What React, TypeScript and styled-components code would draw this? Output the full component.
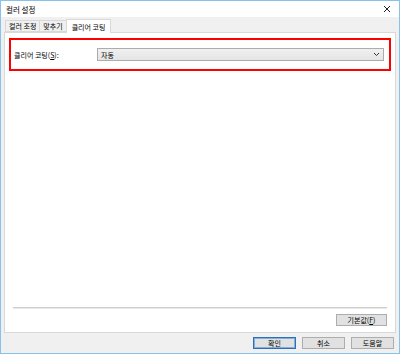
import React from 'react';
import styled, { createGlobalStyle } from 'styled-components';

const Global = createGlobalStyle`
  html, body { margin: 0; padding: 0; background: #fff; }
  body { font-family: 'Noto Sans CJK KR', 'Liberation Sans', sans-serif; }
`;

const Window = styled.div`
  width: 400px;
  height: 354px;
  box-sizing: border-box;
  border: 1px solid #86c3ec;
  display: flex;
  flex-direction: column;
  background: #f0f0f0;
  color: #000;
  font-size: 7px;
`;

const TitleBar = styled.div`
  height: 16px;
  flex: none;
  background: #fff;
  display: flex;
  align-items: center;
  justify-content: space-between;
  padding: 0 8px 0 5px;
  font-size: 7.5px;
`;

const Body = styled.div`
  flex: 1;
  display: flex;
  flex-direction: column;
  padding: 2px 3px 4px 3px;
  min-height: 0;
`;

const TabStrip = styled.div`
  display: flex;
  align-items: flex-end;
  height: 13px;
  padding-left: 1px;
  position: relative;
  z-index: 1;
`;

const Tab = styled.div<{ $active?: boolean }>`
  box-sizing: border-box;
  height: ${p => (p.$active ? '14px' : '12px')};
  margin-bottom: ${p => (p.$active ? '-1px' : '0')};
  padding: 0 ${p => (p.$active ? '5px' : '3px')};
  margin-left: ${p => (p.$active ? '-1px' : '0')};
  display: flex;
  align-items: center;
  border: 1px solid #d9d9d9;
  border-bottom: ${p => (p.$active ? 'none' : '1px solid #d9d9d9')};
  border-left: ${p => (p.$active ? '1px solid #d9d9d9' : 'none')};
  background: ${p => (p.$active ? '#fff' : '#f0f0f0')};
  &:first-child { border-left: 1px solid #d9d9d9; }
  font-size: 7px;
`;

const Panel = styled.div`
  flex: 1;
  background: #fff;
  border: 1px solid #d9d9d9;
  display: flex;
  flex-direction: column;
  padding: 5px 4px 6px 4px;
  min-height: 0;
`;

const Highlight = styled.div`
  border: 2px solid #ff0000;
  height: 33px;
  box-sizing: border-box;
  display: flex;
  align-items: center;
  padding: 0 5px 0 3px;
`;

const Label = styled.span`
  width: 83px;
  flex: none;
  font-size: 7px;
`;

const Select = styled.div`
  flex: 1;
  height: 13px;
  box-sizing: border-box;
  border: 1px solid #acacac;
  background: linear-gradient(#f0f0f0, #e5e5e5);
  display: flex;
  align-items: center;
  justify-content: space-between;
  padding: 0 3px 0 3px;
  font-size: 7px;
`;

const Spacer = styled.div`
  flex: 1;
`;

const Separator = styled.div`
  height: 1px;
  background: #cfcfcf;
  border-bottom: 1px solid #e8e8e8;
  margin: 0 4px 5px 4px;
`;

const ResetRow = styled.div`
  display: flex;
  justify-content: flex-end;
  padding-right: 4px;
`;

const Button = styled.div<{ $w: number; $default?: boolean }>`
  width: ${p => p.$w}px;
  height: 12px;
  box-sizing: border-box;
  border: 1px solid ${p => (p.$default ? '#2f6fb5' : '#adadad')};
  box-shadow: ${p => (p.$default ? 'inset 0 0 0 1px #7fb0e0' : 'none')};
  background: #e1e1e1;
  display: flex;
  align-items: center;
  justify-content: center;
  font-size: 7px;
`;

const Footer = styled.div`
  display: flex;
  justify-content: flex-end;
  gap: 6px;
  padding-top: 4px;
  padding-right: 2px;
`;

const Chevron = () => (
  <svg width="7" height="5" viewBox="0 0 7 5">
    <path d="M1 1 L3.5 3.5 L6 1" fill="none" stroke="#333" strokeWidth="1" />
  </svg>
);

const Close = () => (
  <svg width="8" height="8" viewBox="0 0 8 8">
    <path d="M1 1 L7 7 M7 1 L1 7" stroke="#222" strokeWidth="1" />
  </svg>
);

export default function App() {
  return (
    <>
      <Global />
      <Window>
        <TitleBar>
          <span>컬러 설정</span>
          <Close />
        </TitleBar>
        <Body>
          <TabStrip>
            <Tab>컬러 조정</Tab>
            <Tab>맞추기</Tab>
            <Tab $active>클리어 코팅</Tab>
          </TabStrip>
          <Panel>
            <Highlight>
              <Label>클리어 코팅(<u>S</u>):</Label>
              <Select>
                <span>자동</span>
                <Chevron />
              </Select>
            </Highlight>
            <Spacer />
            <Separator />
            <ResetRow>
              <Button $w={51}>기본값(<u>F</u>)</Button>
            </ResetRow>
          </Panel>
          <Footer>
            <Button $w={43} $default>확인</Button>
            <Button $w={43}>취소</Button>
            <Button $w={43}>도움말</Button>
          </Footer>
        </Body>
      </Window>
    </>
  );
}
